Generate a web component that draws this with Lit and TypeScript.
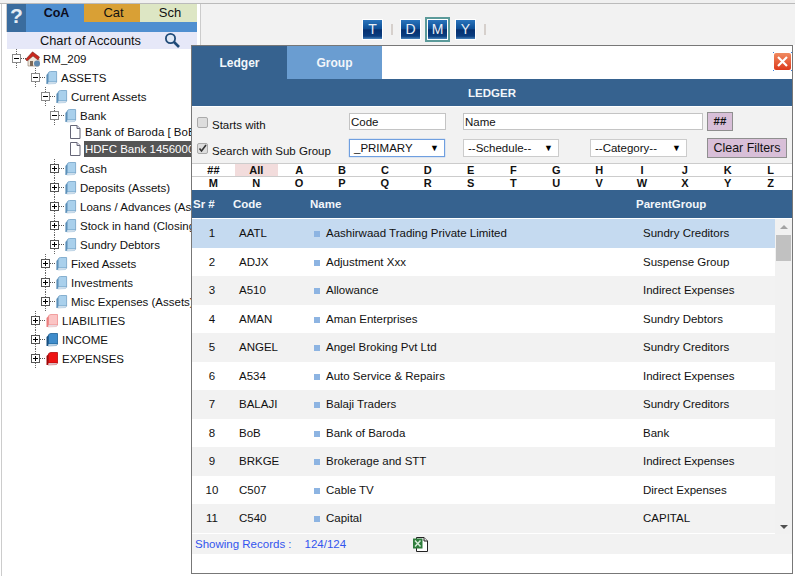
import { LitElement, html, css, svg } from 'lit';
import { customElement, state } from 'lit/decorators.js';

type TreeNode = { label: string; x: number; icon: string; open?: boolean; leaf?: boolean; selected?: boolean };

// x is the page coordinate of the expander box (or of the file icon on leaves)
const TREE: TreeNode[] = [
  { label: 'RM_209', x: 12, icon: 'home', open: true },
  { label: 'ASSETS', x: 31, icon: 'blue', open: true },
  { label: 'Current Assets', x: 41, icon: 'blue', open: true },
  { label: 'Bank', x: 50, icon: 'blue', open: true },
  { label: 'Bank of Baroda [ BoB ]', x: 69, icon: 'file', leaf: true },
  { label: 'HDFC Bank 145600012', x: 69, icon: 'file', leaf: true, selected: true },
  { label: 'Cash', x: 50, icon: 'blue' },
  { label: 'Deposits (Assets)', x: 50, icon: 'blue' },
  { label: 'Loans / Advances (Assets)', x: 50, icon: 'blue' },
  { label: 'Stock in hand (Closing)', x: 50, icon: 'blue' },
  { label: 'Sundry Debtors', x: 50, icon: 'blue' },
  { label: 'Fixed Assets', x: 41, icon: 'blue' },
  { label: 'Investments', x: 41, icon: 'blue' },
  { label: 'Misc Expenses (Assets)', x: 41, icon: 'blue' },
  { label: 'LIABILITIES', x: 31, icon: 'pink' },
  { label: 'INCOME', x: 31, icon: 'navy' },
  { label: 'EXPENSES', x: 31, icon: 'red' },
];

const BOOKS: Record<string, { face: string; line: string; spine: string; w: number }> = {
  blue: { face: '#a9d0ec', line: '#6f9fc4', spine: '#5b8fb8', w: 13 },
  pink: { face: '#fbc4c4', line: '#ee8e8e', spine: '#ea7c7c', w: 14 },
  navy: { face: '#3f8ccb', line: '#1d5f96', spine: '#174f80', w: 14 },
  red: { face: '#ee1414', line: '#b50a0a', spine: '#a00808', w: 14 },
};

const ROWS = [
  ['AATL', 'Aashirwaad Trading Private Limited', 'Sundry Creditors'],
  ['ADJX', 'Adjustment Xxx', 'Suspense Group'],
  ['A510', 'Allowance', 'Indirect Expenses'],
  ['AMAN', 'Aman Enterprises', 'Sundry Debtors'],
  ['ANGEL', 'Angel Broking Pvt Ltd', 'Sundry Creditors'],
  ['A534', 'Auto Service & Repairs', 'Indirect Expenses'],
  ['BALAJI', 'Balaji Traders', 'Sundry Creditors'],
  ['BoB', 'Bank of Baroda', 'Bank'],
  ['BRKGE', 'Brokerage and STT', 'Indirect Expenses'],
  ['C507', 'Cable TV', 'Direct Expenses'],
  ['C540', 'Capital', 'CAPITAL'],
];

const LETTERS = ['##', 'All', ...'ABCDEFGHIJKLMNOPQRSTUVWXYZ'.split('')];

@customElement('app-root')
export class AppRoot extends LitElement {
  @state() tab = 'Ledger';

  static styles = css`
    :host {
      display: block;
      position: relative;
      width: 795px;
      height: 576px;
      overflow: hidden;
      background: #fff;
      font-family: 'Liberation Sans', Arial, sans-serif;
      font-size: 11.5px;
      color: #111;
    }
    .top {
      height: 3px;
      background: #f0f0f0;
      border-bottom: 1px solid #bbb;
    }
    .page {
      display: flex;
      height: 572px;
    }
    .side {
      width: 198px;
      margin-left: 1px;
      border-left: 1px solid #ccc;
      flex: none;
    }
    .main {
      flex: 1;
      height: 41px;
      box-sizing: border-box;
      background: #f2f2f2;
      border-left: 1px solid #ccc;
      display: flex;
      align-items: flex-start;
      padding: 15px 0 0 161px;
    }
    .head {
      margin-left: 4px;
      border-left: 1px solid #ccc;
      width: 190px;
      display: grid;
      grid-template-columns: 19px 58px 56px 57px;
      grid-template-rows: 18px 10px;
      background: #4f8fd0;
      font-size: 13px;
    }
    .head > div {
      text-align: center;
      line-height: 18px;
      padding-left: 3px;
    }
    .help {
      grid-row: 1 / 3;
      background: #3a6c9e;
      color: #e4ecf4;
      font-size: 21px;
      font-weight: bold;
      line-height: 23px !important;
      padding-left: 0 !important;
    }
    .coa { font-weight: bold; font-size: 12.5px; color: #0c0c1c; }
    .cat { background: #d9a035; }
    .sch { background: #dde6c4; }
    .title {
      height: 17px;
      width: 157px;
      margin-left: 5px;
      background: #e6e8f8;
      display: flex;
      align-items: center;
      font-size: 12.8px;
      padding-left: 33px;
      gap: 23px;
    }
    .title svg { margin-top: -2px; }
    .node {
      height: 19px;
      display: flex;
      align-items: center;
      white-space: nowrap;
    }
    .node.leaf { height: 17px; }
    .node.first-leaf { margin-top: -2px; }
    .node.last-leaf { margin-bottom: 2px; }
    .exp {
      width: 9px;
      height: 9px;
      box-sizing: border-box;
      border: 1px solid #8a8a8a;
      background: #fff;
      position: relative;
      flex: none;
    }
    .exp::before {
      content: '';
      position: absolute;
      left: 1px;
      right: 1px;
      top: 3px;
      height: 1px;
      background: #000;
    }
    .exp.plus { border-color: #555; }
    .exp.plus::after {
      content: '';
      position: absolute;
      top: 1px;
      bottom: 1px;
      left: 3px;
      width: 1px;
      background: #000;
    }
    .twig {
      position: relative;
      flex: none;
      display: flex;
      align-items: center;
    }
    .twig::before {
      content: '';
      position: absolute;
      left: 4px;
      top: -5px;
      bottom: -5px;
      border-left: 1px dotted #666;
    }
    .dots {
      width: 5px;
      border-top: 1px dotted #555;
      flex: none;
    }
    .node svg { flex: none; }
    .node svg.home { margin: 0 -1px; }
    .label { padding: 1px; line-height: 14px; margin-left: 2px; }
    .label.hl { background: #555; color: #fff; }

    .tbtn {
      width: 21px;
      height: 21px;
      box-sizing: border-box;
      border: 1px solid #fff;
      background: linear-gradient(#2a74bc, #0d4f96 45%, #06306f 52%, #0a3d80 85%, #4a84bc);
      color: #e9eef5;
      font-size: 14px;
      line-height: 19px;
      text-align: center;
    }
    .tbtn.on { outline: 2px solid #5b9a9a; }
    .tbtn.y { margin-left: 7px; }
    .sep { width: 2px; height: 11px; margin: 5px 7px 0 8px; background: #d6d0cc; }
    .gap6 { width: 6px; }

    .modal {
      position: absolute;
      left: 191px;
      top: 45px;
      width: 600px;
      height: 527px;
      background: #fff;
      border: 1px solid #777;
      display: flex;
      flex-direction: column;
    }
    .mtabs { height: 33px; display: flex; flex: none; position: relative; }
    .mtabs button {
      all: unset;
      width: 95px;
      text-align: center;
      color: #f2f6fa;
      font-weight: bold;
      line-height: 32px;
      font-family: inherit;
      font-size: 12px;
    }
    .mtabs .active { background: #36628f; }
    .mtabs .idle { background: #6a9dd1; }
    .close {
      position: absolute;
      right: 1px;
      top: 7px;
      width: 17px;
      height: 17px;
      border-radius: 2px;
      background: linear-gradient(#f08a60, #dd3a1c);
    }
    .close svg { display: block; overflow: visible; }
    .bar {
      height: 27px;
      flex: none;
      background: #36628f;
      color: #f2f6fa;
      font-weight: bold;
      text-align: center;
      line-height: 29px;
      border-bottom: 1px solid #fff;
    }
    .filters {
      flex: none;
      height: 57px;
      box-sizing: border-box;
      background: #f2f2f2;
      border-bottom: 1px solid #ccc;
      display: grid;
      grid-template-columns: 153px 114px 127px 117px auto;
      grid-template-rows: 27px 25px;
      padding: 1px 0 0 4px;
      align-items: center;
    }
    .chk { display: flex; align-items: center; gap: 4px; white-space: nowrap; margin: 2px 0 0 1px; }
    .chk .txt { margin-top: 4px; }
    .box {
      width: 11px;
      height: 11px;
      box-sizing: border-box;
      border: 1px solid #aaa;
      border-radius: 2px;
      background: #ddd;
      display: block;
      flex: none;
    }
    .box svg { display: block; }
    .field {
      box-sizing: border-box;
      height: 17px;
      border: 1px solid #c4c4c4;
      background: #fff;
      font: inherit;
      padding: 0 1px;
      color: #111;
      outline: none;
      margin: 0;
      display: block;
    }
    .code { width: 97px; }
    .name { width: 240px; }
    .namecell { grid-column: 3 / 5; }
    .pick {
      box-sizing: border-box;
      height: 18px;
      width: 96px;
      border: 1px solid #ccc;
      background: #fff;
      display: flex;
      align-items: center;
      justify-content: space-between;
      padding: 0 5px 0 4px;
    }
    .pick.focus { border-color: #6f9fe0; box-shadow: 0 0 1px #6f9fe0; }
    .pick.wide { width: 97px; }
    .tri { font-size: 9px; color: #000; }
    .pbtn {
      box-sizing: border-box;
      background: #d8bfd8;
      border: 1px solid #8f8f8f;
      display: block;
      text-align: center;
    }
    .hash { width: 26px; height: 19px; line-height: 17px; font-weight: bold; }
    .clear { width: 80px; height: 20px; line-height: 18px; font-size: 12.4px; }
    .letters {
      flex: none;
      display: grid;
      grid-template-columns: repeat(14, 1fr);
      grid-auto-rows: 12px;
      row-gap: 1px;
      height: 26px;
      font-size: 11px;
      font-weight: bold;
      text-align: center;
      line-height: 12px;
      position: relative;
    }
    .letters span.all { background: #f2dcdc; }
    .letters .rule { position: absolute; left: 0; right: 0; top: 12px; height: 1px; background: #ccc; }
    .ghead, .row {
      display: grid;
      align-items: center;
    }
    .ghead {
      grid-template-columns: 41px 77px 326px 1fr;
      flex: none;
      height: 28px;
      background: #36628f;
      color: #f2f6fa;
      font-weight: bold;
      border-bottom: 1px solid #fff;
    }
    .ghead span:first-child { padding-left: 1px; }
    .listwrap { flex: none; height: 314px; display: flex; }
    .list { flex: 1; overflow: hidden; }
    .row { grid-template-columns: 40px 77px 326px 1fr; height: 28.5px; }
    .row:nth-child(odd) { background: #f2f2f2; }
    .row.current { background: #c5daf0; }
    .row .sr { text-align: center; }
    .row .cd { padding-left: 7px; }
    .row .nm { display: flex; align-items: center; gap: 6px; padding-left: 5px; }
    .row .sq { width: 6px; height: 6px; background: #8db4e2; margin-top: 2px; }
    .row .pg { padding-left: 8px; }
    .scroll {
      width: 17px;
      margin-bottom: -1px;
      background: #f1f1f1;
      display: flex;
      flex-direction: column;
      align-items: center;
      justify-content: space-between;
      padding: 6px 0 5px;
      box-sizing: border-box;
      position: relative;
    }
    .up { border: 4px solid transparent; border-top: 0; border-bottom-color: #a3a3a3; }
    .down { border: 4px solid transparent; border-bottom: 0; border-top-color: #505050; }
    .thumb { position: absolute; top: 16px; left: 1px; width: 15px; height: 26px; background: #c1c1c1; }
    .foot {
      flex: none;
      margin-top: 1px;
      height: 20px;
      background: #f2f2f2;
      color: #3355ee;
      display: flex;
      align-items: center;
      padding-left: 3px;
    }
    .foot .cnt { margin-left: 13px; width: 107px; }
  `;

  private book(kind: string) {
    const b = BOOKS[kind];
    return html`<svg width=${b.w} height="15" viewBox="0 0 14 15" preserveAspectRatio="none">
      <path d="M3.5 3 Q4 1.5 6 1.5 H12.5 V12 H3.5 Z" fill=${b.face} stroke=${b.line} stroke-width=".8" />
      <path d="M3.5 3 L1.5 5 V14 H3 L3.5 12 Z" fill=${b.spine} />
      <path d="M3 14 L3.5 12 H12.5 L11.5 13.5 Z" fill="#e3edf5" stroke=${b.line} stroke-width=".4" />
    </svg>`;
  }

  private nodeIcon(icon: string) {
    if (icon === 'home') {
      return html`<svg class="home" width="16" height="16" viewBox="0 0 16 16">
        <path d="M3 8 L8 3.5 L14 8 V15 H3 Z" fill="#efe7dc" stroke="#8a7a6a" stroke-width=".6" />
        <path d="M0.5 8.5 L7.5 .8 L14.5 6 L13 9 L8 5 L2 10 Z" fill="#c8281e" stroke="#6a2a20" stroke-width=".5" />
        <circle cx="12" cy="12.5" r="3" fill="#5f88ad" />
        <rect x="5" y="10" width="3" height="5" fill="#7f6a58" />
      </svg>`;
    }
    if (icon === 'file') {
      return html`<svg width="13" height="14" viewBox="0 0 13 14">
        <path d="M1.5 .5 H8 L11 3.5 V13.5 H1.5 Z" fill="#fff" stroke="#667" />
        <path d="M8 .5 V3.5 H11" fill="#dde" stroke="#667" />
      </svg>`;
    }
    return this.book(icon);
  }

  private node(n: TreeNode, i: number) {
    const cls = ['node', n.leaf ? 'leaf' : '', i === 4 ? 'first-leaf' : '', i === 5 ? 'last-leaf' : ''].join(' ');
    return html`<div class=${cls} style="padding-left:${n.x - 2}px">
      ${n.leaf
        ? ''
        : html`<span class="twig"><span class="exp ${n.open ? '' : 'plus'}"></span></span><span class="dots"></span>`}
      ${this.nodeIcon(n.icon)}
      <span class="label ${n.selected ? 'hl' : ''}">${n.label}</span>
    </div>`;
  }

  private check(on: boolean, text: string) {
    return html`<label class="chk">
      <span class="box">${on
        ? svg`<svg width="9" height="9" viewBox="0 0 9 9"><path d="M1.5 4.5 L3.5 7 L8 1" fill="none" stroke="#333" stroke-width="1.6"/></svg>`
        : ''}</span><span class="txt">${text}</span>
    </label>`;
  }

  render() {
    return html`
      <div class="top"></div>
      <div class="page">
        <div class="side">
          <div class="head">
            <div class="help">?</div>
            <div class="coa">CoA</div>
            <div class="cat">Cat</div>
            <div class="sch">Sch</div>
          </div>
          <div class="title">
            Chart of Accounts
            <svg width="16" height="16" viewBox="0 0 16 16">
              <circle cx="6.5" cy="6.5" r="4.6" fill="#dfe8f5" stroke="#1f4a78" stroke-width="1.8" />
              <path d="M10 10 L15 15" stroke="#1f4a78" stroke-width="2.6" />
            </svg>
          </div>
          <div class="tree">${TREE.map((n, i) => this.node(n, i))}</div>
        </div>
        <div class="main">
          <div class="tbtn">T</div>
          <div class="sep"></div>
          <div class="tbtn">D</div>
          <div class="gap6"></div>
          <div class="tbtn on">M</div>
          <div class="tbtn y">Y</div>
          <div class="sep"></div>
        </div>
      </div>

      <div class="modal">
        <div class="mtabs">
          <button class="active">Ledger</button>
          <button class="idle">Group</button>
          <div class="close">
            <svg width="17" height="17" viewBox="0 0 17 17">
              <path d="M4 4 L13 13 M13 4 L4 13" stroke="#fff" stroke-width="2.2" />
              <path d="M-1 -1 h1 v1 h-1 z M17 -1 h1 v1 h-1 z M-1 17 h1 v1 h-1 z M17 17 h1 v1 h-1 z" fill="#3f7fd6" />
            </svg>
          </div>
        </div>
        <div class="bar">LEDGER</div>
        <div class="filters">
          ${this.check(false, 'Starts with')}
          <input class="field code" value="Code" />
          <div class="namecell"><input class="field name" value="Name" /></div>
          <span class="pbtn hash">##</span>
          ${this.check(true, 'Search with Sub Group')}
          <div class="pick focus">_PRIMARY<span class="tri">▼</span></div>
          <div class="pick">--Schedule--<span class="tri">▼</span></div>
          <div class="pick wide">--Category--<span class="tri">▼</span></div>
          <span class="pbtn clear">Clear Filters</span>
        </div>
        <div class="letters">
          ${LETTERS.map((l) => html`<span class=${l === 'All' ? 'all' : ''}>${l}</span>`)}
          <div class="rule"></div>
        </div>
        <div class="ghead">
          <span>Sr #</span><span>Code</span><span>Name</span><span>ParentGroup</span>
        </div>
        <div class="listwrap">
          <div class="list">
            ${ROWS.map(
              (r, i) => html`<div class="row ${i === 0 ? 'current' : ''}">
                <span class="sr">${i + 1}</span>
                <span class="cd">${r[0]}</span>
                <span class="nm"><span class="sq"></span>${r[1]}</span>
                <span class="pg">${r[2]}</span>
              </div>`
            )}
          </div>
          <div class="scroll">
            <span class="up"></span>
            <span class="thumb"></span>
            <span class="down"></span>
          </div>
        </div>
        <div class="foot">
          Showing Records :
          <span class="cnt">124/124</span>
          <svg width="17" height="17" viewBox="0 0 17 17">
            <path d="M4.5 1.5 H12 L15.5 5 V15.5 H4.5 Z" fill="#fff" stroke="#222" />
            <path d="M12 1.5 V5 H15.5" fill="#e8e8e8" stroke="#222" />
            <rect x="1" y="2.5" width="9.5" height="10" fill="#2f7d3c" />
            <path d="M3 4.5 L8.5 10.5 M8.5 4.5 L3 10.5" stroke="#d6ecd8" stroke-width="1.5" />
          </svg>
        </div>
      </div>
    `;
  }
}
